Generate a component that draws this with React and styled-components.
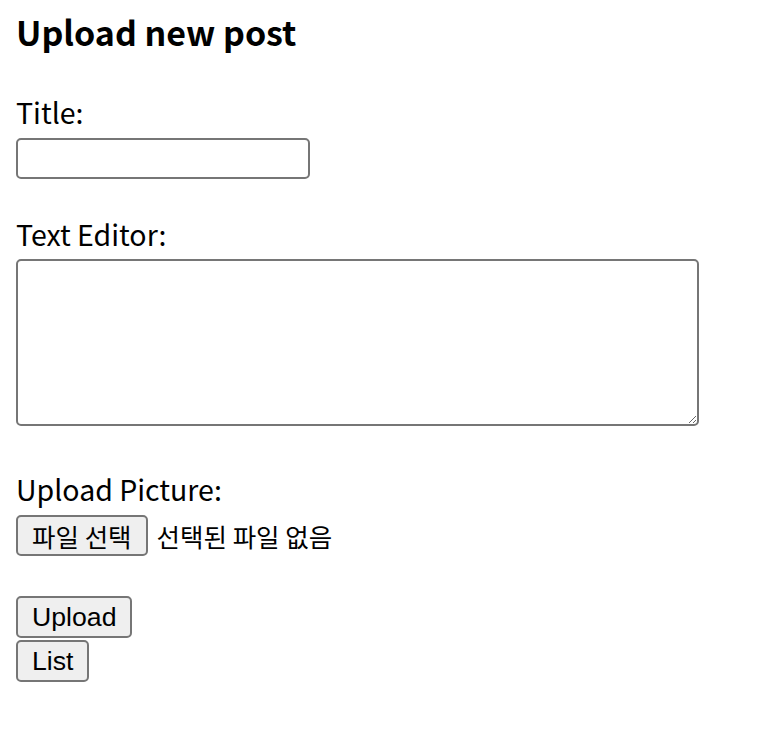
import React from "react";
import styled, { createGlobalStyle } from "styled-components";

const GlobalStyle = createGlobalStyle`
  body {
    margin: 0;
    background: #fff;
    color: #000;
    font-family: "Noto Sans CJK KR", "Noto Sans", sans-serif;
  }
`;

const Page = styled.div`
  padding: 12px 16px 40px;
`;

const Heading = styled.h1`
  margin: 0;
  font-size: 34px;
  line-height: 40px;
  font-weight: 700;
`;

const Form = styled.form`
  display: flex;
  flex-direction: column;
  align-items: flex-start;
`;

const Field = styled.div`
  display: flex;
  flex-direction: column;
  align-items: flex-start;
  gap: ${(p) => p.$gap || 9}px;
  margin-top: ${(p) => p.$top}px;
`;

const Label = styled.label`
  display: block;
  font-size: 28.5px;
  line-height: 34px;
`;

const TextInput = styled.input`
  box-sizing: border-box;
  width: 294px;
  height: 41px;
  border: 2px solid #767676;
  border-radius: 5px;
  padding: 2px 6px;
  font-size: 24px;
  outline: none;
`;

const Editor = styled.textarea`
  box-sizing: border-box;
  width: 683px;
  height: 167px;
  border: 2px solid #767676;
  border-radius: 5px;
  padding: 4px;
  font-size: 24px;
  outline: none;
`;

const FileRow = styled.div`
  display: flex;
  align-items: center;
  gap: 9px;
`;

const Button = styled.button`
  box-sizing: border-box;
  height: ${(p) => p.$h || 42}px;
  padding: 0 ${(p) => p.$px || 14}px;
  background: #efefef;
  border: 2px solid #767676;
  border-radius: 5px;
  color: #000;
  font-family: ${(p) =>
    p.$korean
      ? `"Noto Sans CJK KR", sans-serif`
      : `"Liberation Sans", Arial, sans-serif`};
  font-size: ${(p) => (p.$korean ? 25.5 : 26.67)}px;
  line-height: 1;
  cursor: pointer;
`;

const FileStatus = styled.span`
  font-size: 25.5px;
  line-height: 30px;
`;

const Actions = styled.div`
  display: flex;
  flex-direction: column;
  align-items: flex-start;
  gap: 2px;
  margin-top: 40px;
`;

export default function App() {
  return (
    <Page>
      <GlobalStyle />
      <Heading>Upload new post</Heading>
      <Form onSubmit={(e) => e.preventDefault()}>
        <Field $top={43}>
          <Label htmlFor="title">Title:</Label>
          <TextInput id="title" type="text" />
        </Field>
        <Field $top={38} $gap={8}>
          <Label htmlFor="editor">Text Editor:</Label>
          <Editor id="editor" />
        </Field>
        <Field $top={46}>
          <Label>Upload Picture:</Label>
          <FileRow>
            <Button type="button" $korean $h={41} $px={14}>
              파일 선택
            </Button>
            <FileStatus>선택된 파일 없음</FileStatus>
          </FileRow>
        </Field>
        <Actions>
          <Button type="submit">Upload</Button>
          <Button type="button">List</Button>
        </Actions>
      </Form>
    </Page>
  );
}
